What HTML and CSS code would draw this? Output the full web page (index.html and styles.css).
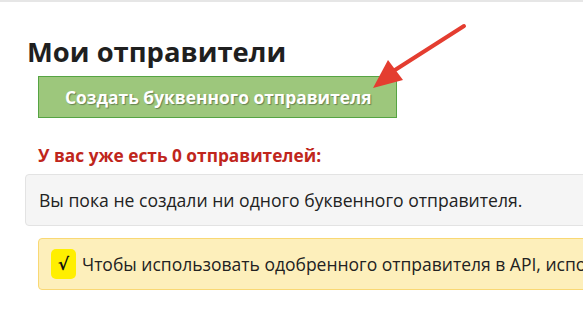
FILE: index.html
```html
<!DOCTYPE html>
<html lang="ru">
<head>
<meta charset="utf-8">
<link rel="stylesheet" href="styles.css">
</head>
<body>
<div class="page">
  <h1 class="title">Мои отправители</h1>
  <a class="btn-create" href="#">Создать буквенного отправителя</a>
  <p class="count">У вас уже есть 0 отправителей:</p>
  <div class="empty">Вы пока не создали ни одного буквенного отправителя.</div>
  <div class="note"><span class="check">√</span><span class="note-text">Чтобы использовать одобренного отправителя в API, используйте его имя</span></div>
  <svg class="arrow" width="120" height="80" viewBox="0 0 120 80">
    <line x1="105" y1="8" x2="36" y2="52" stroke="#e43d30" stroke-width="4" stroke-linecap="round"/>
    <polygon points="14,70 29,42 44,62" fill="#e43d30"/>
  </svg>
</div>
</body>
</html>
```
FILE: styles.css
```css
html, body {
  margin: 0;
  padding: 0;
  background: #fff;
}
body {
  font-family: "Open Sans", "Noto Sans", sans-serif;
  color: #222;
  overflow: hidden;
  width: 583px;
  height: 315px;
}
.page {
  position: relative;
  border-top: 2px solid #e6e6e6;
  padding: 0 0 0 25px;
  width: 760px;
}
.title {
  margin: 31px 0 0 2px;
  font-size: 27.4px;
  font-weight: 700;
  line-height: 37px;
  color: #1f1f1f;
}
.btn-create {
  display: inline-flex;
  align-items: center;
  box-sizing: border-box;
  margin: 6px 0 0 13px;
  width: 359px;
  height: 42px;
  padding-left: 26px;
  background: #9dc77c;
  border: 1px solid #56a443;
  color: #fff;
  font-weight: 700;
  font-size: 17.4px;
  text-decoration: none;
  text-shadow: 1px 1px 1px rgba(0,0,0,0.35);
}
.count {
  margin: 28px 0 0 13px;
  color: #c0261c;
  font-weight: 700;
  font-size: 17.3px;
  line-height: 20px;
}
.empty {
  box-sizing: border-box;
  margin-top: 8px;
  height: 52px;
  display: flex;
  align-items: center;
  padding-left: 13px;
  background: #f5f5f5;
  border: 1px solid #e3e3e3;
  border-radius: 4px;
  font-size: 17.6px;
  color: #222;
}
.note {
  box-sizing: border-box;
  margin: 12px 0 0 13px;
  height: 52px;
  display: flex;
  align-items: center;
  padding-left: 12px;
  background: #fdefbb;
  border: 1px solid #f9d874;
  border-radius: 4px;
  font-size: 17.5px;
  color: #222;
  white-space: nowrap;
}
.check {
  flex-shrink: 0;
  display: inline-flex;
  align-items: center;
  justify-content: center;
  width: 25px;
  height: 30px;
  background: #ffef00;
  border-radius: 5px;
  font-weight: 700;
  font-size: 17px;
  color: #111;
  margin-right: 6px;
  font-family: "DejaVu Sans", sans-serif;
}
.arrow {
  position: absolute;
  left: 359px;
  top: 16px;
}
```
